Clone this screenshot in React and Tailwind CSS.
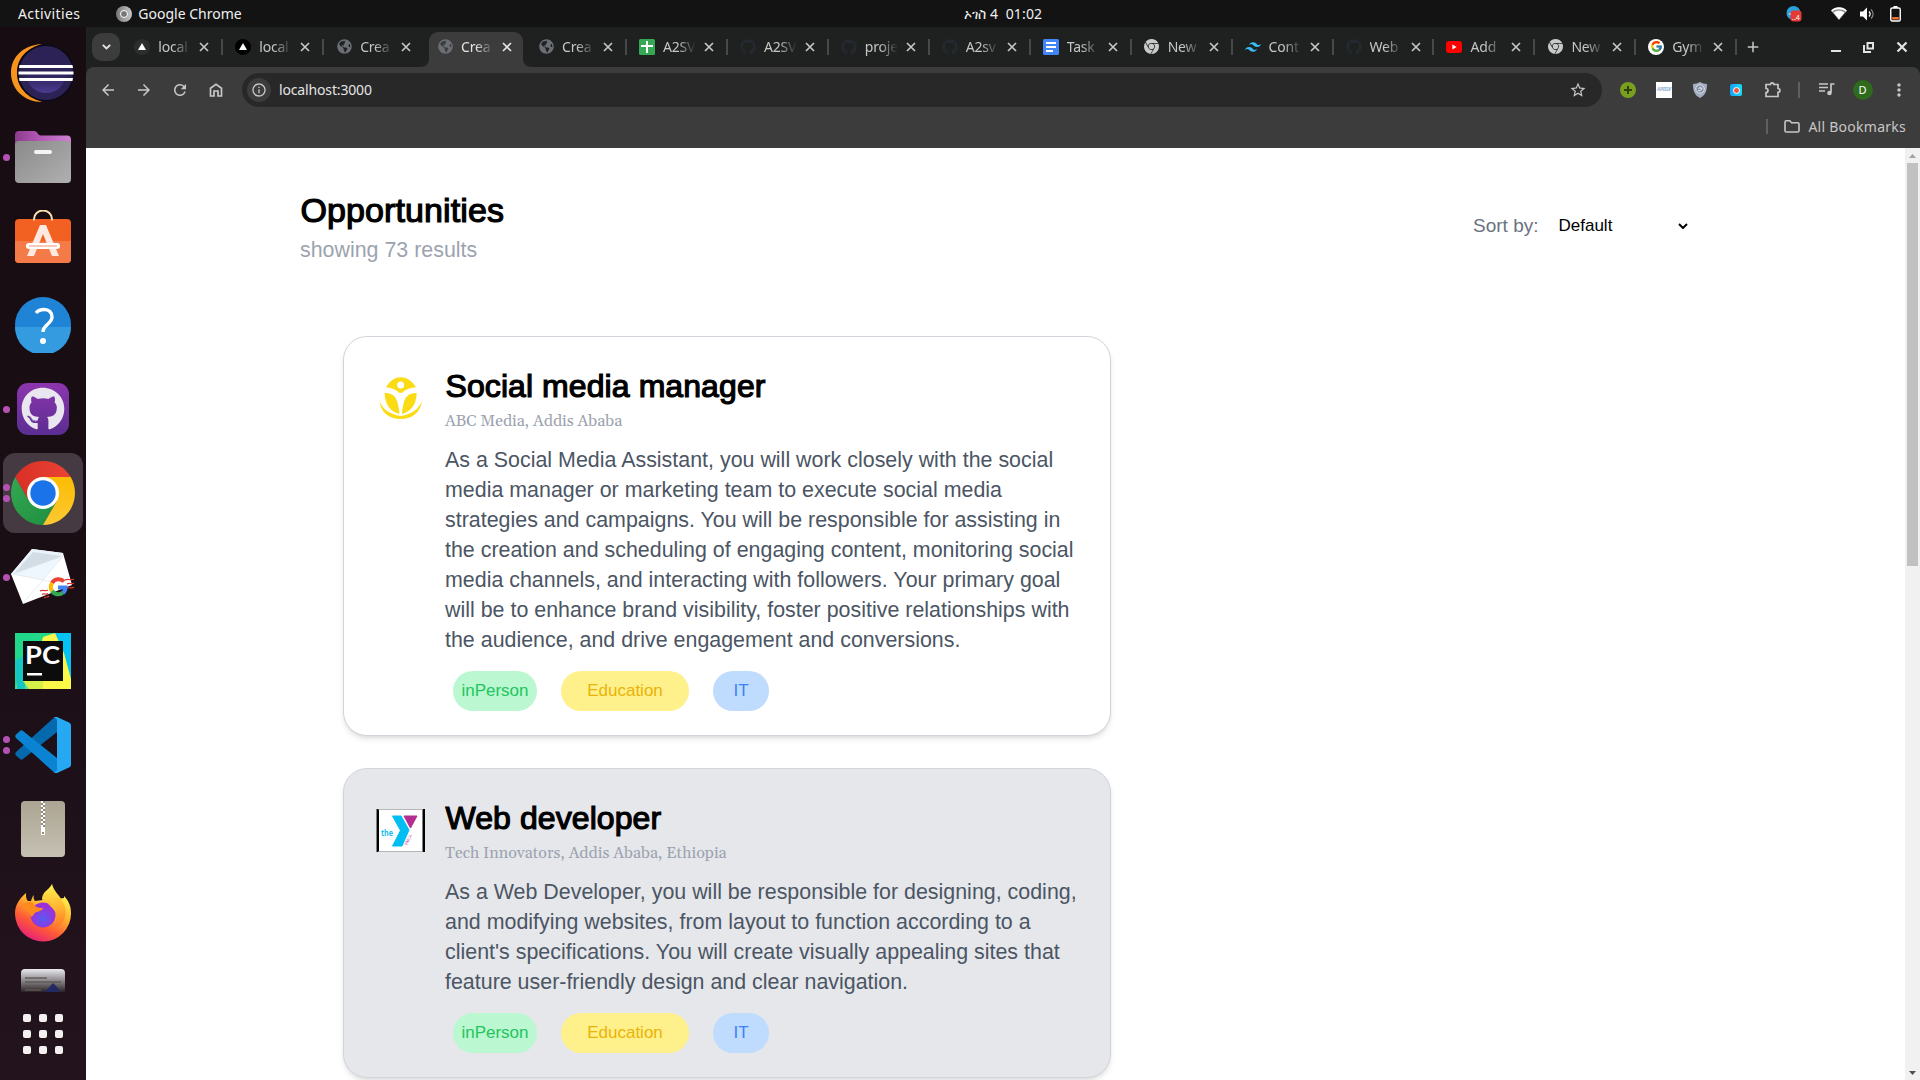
import React from "react";
import { FaGithub, FaGlobeAmericas } from "react-icons/fa";
import { SiGooglechrome, SiTailwindcss } from "react-icons/si";
import { FcGoogle } from "react-icons/fc";
import {
  MdArrowBack, MdArrowForward, MdRefresh, MdStarOutline, MdMoreVert, MdAdd, MdInfoOutline,
} from "react-icons/md";

/* ---------- favicons ---------- */
const NextIcon = ({ dark }) => (
  <span className={`flex size-4 items-center justify-center rounded-full ${dark ? "bg-black" : "bg-[#2c2e2e]"}`}>
    <svg width="8" height="7" viewBox="0 0 8 7"><path d="M4 0l4 7H0z" fill="#fff" /></svg>
  </span>
);
const Globe = () => <FaGlobeAmericas size={15} color="#6b6f75" />;
const Octo = () => <FaGithub size={16} color="#24292f" />;
const ChromeGrey = () => <SiGooglechrome size={15} color="#c7cac8" />;
const Sheets = () => (
  <svg width="16" height="16" viewBox="0 0 16 16"><rect width="16" height="16" rx="1.5" fill="#34a853" /><path d="M7 2h2v4h5v2H9v6H7V8H2V6h5z" fill="#fff" /></svg>
);
const Docs = () => (
  <svg width="16" height="16" viewBox="0 0 16 16"><rect width="16" height="16" rx="1.5" fill="#4285f4" /><path d="M3 3h10v2H3zM3 7h10v2H3zM3 11h7v2H3z" fill="#fff" /></svg>
);
const Tube = () => (
  <svg width="16" height="12" viewBox="0 0 16 12"><rect width="16" height="12" rx="3" fill="#f00" /><path d="M6.4 3.5v5L10.6 6z" fill="#fff" /></svg>
);
const Goog = () => <span className="flex size-4 items-center justify-center rounded-full bg-white"><FcGoogle size={13} /></span>;

const tabs = [
  ["local", <NextIcon />], ["local", <NextIcon dark />], ["Crea", <Globe />], ["Crea", <Globe />], ["Crea", <Globe />],
  ["A2SV", <Sheets />], ["A2SV", <Octo />], ["proje", <Octo />], ["A2sv", <Octo />], ["Task", <Docs />],
  ["New", <ChromeGrey />], ["Cont", <SiTailwindcss size={16} color="#38bdf8" />], ["Web", <Octo />], ["Add", <Tube />],
  ["New", <ChromeGrey />], ["Gym", <Goog />],
];

function Tab({ label, icon, active, noSep }) {
  return (
    <div className={`relative flex h-[34px] w-[100.950px] shrink-0 items-center self-end ${active ? "text-[#e3e3e3]" : "text-[#c4c7c5]"}`}>
      {active && (
        <svg className="absolute -top-px left-[-5px]" width="112" height="35" viewBox="0 0 112 35">
          <path d="M0 35c6 0 9-3 9-9V10C9 4 13 0 19 0H93c6 0 10 4 10 10v16c0 6 3 9 9 9z" fill="#3c3c3c" />
        </svg>
      )}
      <span className="relative mb-[7px] ml-[12px] flex w-4 shrink-0 justify-center">{icon}</span>
      <span className="relative mb-[8px] ml-2 w-[33px] shrink-0 whitespace-nowrap text-[14px] tracking-[-0.200px] [mask-image:linear-gradient(90deg,#000_45%,transparent)]">{label}</span>
      <svg className="relative mb-[7px] ml-[8px]" width="10" height="10" viewBox="0 0 10 10" stroke="currentColor" strokeWidth="1.700"><path d="M1 1l8 8M9 1L1 9" /></svg>
      {!active && !noSep && <span className="absolute top-[6px] right-0 h-4 w-[2px] bg-[#474949]" />}
    </div>
  );
}

/* ---------- dock icons ---------- */
const Eclipse = () => (
  <svg width="64" height="60" viewBox="0 0 64 60">
    <defs><linearGradient id="ec" x1="0" y1="0" x2="0" y2="1"><stop offset="0" stopColor="#2c2255" /><stop offset=".5" stopColor="#2c2255" /><stop offset="1" stopColor="#4b3a8f" /></linearGradient></defs>
    <path d="M31 1C12 2 0 14 0 30s13 29 31 29C17 53 6 46 6 30S17 5 31 1z" fill="#f7941e" />
    <circle cx="35" cy="30" r="28.5" fill="#0d0a18" />
    <circle cx="35" cy="30" r="27" fill="#2c2255" />
    <circle cx="35" cy="30" r="20" fill="url(#ec)" />
    <path d="M8.5 22h53l.5 3H8zM7.500 28.500h55v3h-55zM8 35h54l-.5 3h-53z" fill="#fff" />
  </svg>
);
const Files = () => (
  <svg width="56" height="52" viewBox="0 0 56 52">
    <defs>
      <linearGradient id="fp"><stop offset="0" stopColor="#8b3b8c" /><stop offset=".4" stopColor="#b155b4" /><stop offset="1" stopColor="#cc82cf" /></linearGradient>
      <linearGradient id="fg" x2="1" y2="1"><stop offset="0" stopColor="#8a8a8a" /><stop offset="1" stopColor="#b0b0b0" /></linearGradient>
    </defs>
    <path d="M0 20V4a4 4 0 014-4h15c2 0 3 1 4 3 1 1 2 1.500 4 1.500h25a4 4 0 014 4V20z" fill="url(#fp)" />
    <rect y="10" width="56" height="42" rx="4" fill="url(#fg)" />
    <rect x="19" y="19" width="18" height="4" rx="2" fill="#f4f4f4" />
  </svg>
);
const Software = () => (
  <svg className="mb-[9px]" width="56" height="53" viewBox="0 0 56 53">
    <rect y="9" width="56" height="44" rx="4" fill="#f26022" />
    <path d="M0 31h56v18a4 4 0 01-4 4H4a4 4 0 01-4-4z" fill="#f47b47" />
    <path d="M19 10.500V9a9 8.500 0 0118 0v1.500" fill="none" stroke="#f7dfb0" strokeWidth="2" />
    <path d="M25 15h6l13 31h-7L28 24 19 46h-7z" fill="#ffe9e0" />
    <path d="M14 36h28" stroke="#fff" strokeWidth="6" strokeLinecap="round" /><path d="M14 36h28" stroke="#f9c9b7" strokeWidth="2" />
  </svg>
);
const Help = () => (
  <svg className="mb-px" width="56" height="56" viewBox="0 0 56 56">
    <circle cx="28" cy="28" r="28" fill="#1f84d6" />
    <path d="M0 30h56a28 28 0 01-56 0z" fill="#359be1" />
    <path d="M21 16c2-2.500 4.500-3.500 8-3.500 5 0 8 3 8 7.500 0 7-9 7.500-9 15" fill="none" stroke="#fff" strokeWidth="3.400" />
    <circle cx="28" cy="44" r="3" fill="#fff" />
  </svg>
);
const GithubApp = () => (
  <span className="flex size-[52px] items-center justify-center rounded-[11px] bg-linear-to-b from-[#8d35ae] to-[#5a2d91]">
    <FaGithub size={44} color="#e9e6f0" />
  </span>
);
const Chrome = () => (
  <svg width="64" height="64" viewBox="0 0 64 64">
    <defs>
      <linearGradient id="cr"><stop offset="0" stopColor="#d93025" /><stop offset="1" stopColor="#ea4335" /></linearGradient>
      <linearGradient id="cy" x1="0" y1="1" x2="0" y2="0"><stop offset="0" stopColor="#fcc934" /><stop offset="1" stopColor="#fbbc04" /></linearGradient>
      <linearGradient id="cg" x1="1" y1="1" x2="0" y2="0"><stop offset="0" stopColor="#1e8e3e" /><stop offset="1" stopColor="#34a853" /></linearGradient>
    </defs>
    <path d="M32 64A32 32 0 014.300 16l13.840 24h27.720z" fill="url(#cg)" />
    <path d="M59.700 16A32 32 0 0132 64l13.860-24L32 16z" fill="url(#cy)" />
    <path d="M4.300 16A32 32 0 0159.700 16H32L18.140 40z" fill="url(#cr)" />
    <circle cx="32" cy="32" r="16" fill="#fff" /><circle cx="32" cy="32" r="12.700" fill="#1a73e8" />
  </svg>
);
const Mail = () => (
  <svg width="64" height="56" viewBox="0 0 64 56">
    <path d="M0 25L21 0l31 4 9 32-49 19z" fill="#fff" />
    <path d="M0 25L21 0l31 4-20 27z" fill="#eaf3fa" />
    <path d="M4 24L22 3l28 4-22 13z" fill="#d3dde6" />
    <path d="M2 25l50-18-20 24z" fill="#eef7fd" stroke="#dde3e8" strokeWidth=".6" /><path d="M12 54l20-23 12 3" fill="none" stroke="#dde3e8" strokeWidth=".7" />
    <path d="M29 42c3-2 5 1 8-1M31 45.500c3-2 4 1 6-1M33 49c3-2 3 0 5-2M54 31c3-2 5 1 9-1M56 35c3-2 4 1 7-1M56 39c3-1 5 1 7-1" stroke="#e3342b" strokeWidth="1.200" fill="none" />
    <g fill="none" strokeWidth="4">
      <path d="M53 32.500a7.500 7.500 0 00-12 1.500" stroke="#ea4335" />
      <path d="M41 34a7.500 7.500 0 000 8" stroke="#fbbc05" />
      <path d="M41 42a7.500 7.500 0 0011 1.500" stroke="#34a853" />
      <path d="M47 38.500h7.500c0 2-.8 4-2.500 5.500" stroke="#4285f4" />
    </g>
  </svg>
);
const PyCharm = () => (
  <svg width="56" height="56" viewBox="0 0 56 56">
    <rect width="56" height="56" fill="#21d789" />
    <path d="M38 0h18v56L38 30z" fill="#07c3f2" />
    <path d="M28 4L40 0l9 20 7 26v10H14z" fill="#fcf84a" /><path d="M0 56l8-30 16-20L14 56z" fill="#5ddf8a" /><path d="M0 28l10-6v34H2z" fill="#14c7c2" />
    <path d="M8 48h20v8H14z" fill="#d6f04a" />
    <rect x="8" y="8" width="40" height="40" fill="#0c0c0c" />
    <text x="10" y="31" fontFamily="Lato, 'Open Sans', sans-serif" fontWeight="700" fontSize="25" textLength="35" lengthAdjust="spacingAndGlyphs" fill="#fff">PC</text>
    <rect x="12" y="40" width="15" height="2.500" fill="#fff" />
  </svg>
);
const Code = () => (
  <svg width="56" height="56" viewBox="0 0 56 56">
    <path d="M42 0v15L8 42c-1 1-2 1-3 0l-4-3.500c-1-1-1-2.500 0-3.500L38 1.500z" fill="#0569ae" />
    <path d="M42 56V41L8 14c-1-1-2-1-3 0l-4 3.500c-1 1-1 2.500 0 3.500l37 33.500z" fill="#0a84d2" />
    <path d="M42 0l12 5.500c1.300.6 2 1.500 2 3v39c0 1.500-.7 2.400-2 3L42 56c-2 .3-3-.4-4-1.500 2 1 4 0 4-2V3.500c0-2-2-3-4-2C39 .400 40-.3 42 0z" fill="#27a8f3" />
  </svg>
);
const Zip = () => (
  <svg width="44" height="56" viewBox="0 0 44 56">
    <defs>
      <linearGradient id="zp" x2="0" y2="1"><stop offset="0" stopColor="#aca593" /><stop offset="1" stopColor="#c5c1b2" /></linearGradient>
      <pattern id="zt" width="4" height="4" patternUnits="userSpaceOnUse"><rect width="4" height="4" fill="#8f8a7c" /><path d="M0 0h2v2H0zM2 2h2v2H2z" fill="#fff" /></pattern>
    </defs>
    <rect width="44" height="56" rx="4" fill="url(#zp)" /><rect x="20" width="4" height="27" fill="url(#zt)" />
    <rect x="20" y="26" width="4" height="8" fill="#fff" /><rect x="21" y="31" width="2" height="2" fill="#8f8a7c" />
  </svg>
);
const Firefox = () => (
  <svg width="56" height="58" viewBox="0 0 56 58">
    <defs>
      <linearGradient id="ff" x1=".8" y1="0" x2=".2" y2="1"><stop offset="0" stopColor="#fff44f" /><stop offset=".35" stopColor="#ffb22c" /><stop offset=".65" stopColor="#ff5a36" /><stop offset="1" stopColor="#e31587" /></linearGradient>
      <linearGradient id="fy" x2="0" y2="1"><stop offset="0" stopColor="#fff44f" /><stop offset=".6" stopColor="#ffa62a" /><stop offset="1" stopColor="#ff6a33" /></linearGradient>
      <radialGradient id="fv" cx=".5" cy=".65"><stop offset="0" stopColor="#5a5af5" /><stop offset="1" stopColor="#9b30d8" /></radialGradient>
    </defs>
    <path d="M11 9c0 4 0 6 2 8l3 0c1-3 1-4 3-6-1 3 0 4 1 6l8-1 7 0 14-2c0 0 0-1 0-2 6 6 7 12 7 17A28 28 0 010 30C0 21 4 15 11 9z" fill="url(#ff)" />
    <path d="M37 0c2 8 8 11 12 20 5 12-2 25-14 27 8-6 8-18-1-26-4-3-7-3-7-7 1-7 7-8 10-14z" fill="url(#fy)" />
    <circle cx="28" cy="31" r="12.500" fill="url(#fv)" />
    <path d="M5 22c4-3 8-5 12-4l3 4c3 2 6 2 8 2-1 4-7 3-9 6-1 2-2 2-3 3-1-6-5-6-11-11z" fill="#ff8a1f" />
    <path d="M33 20c5 0 8 4 8 9-2-4-4-5-8-9z" fill="#ffbd2e" />
  </svg>
);
const Editor = () => (
  <svg width="44" height="23" viewBox="0 0 44 23">
    <defs><linearGradient id="ed" x2="0" y2="1"><stop offset="0" stopColor="#e9e9ec" /><stop offset=".5" stopColor="#8c888d" /><stop offset="1" stopColor="#2b2228" /></linearGradient></defs>
    <path d="M0 23V4a4 4 0 014-4h36a4 4 0 014 4v19z" fill="url(#ed)" />
    <path d="M4 8h22v2H4zM4 12h36v2H4zM4 16h16v2H4zM4 20h16v2H4z" fill="#5d5950" opacity=".7" />
    <path d="M32 14l7 7-2 2H24z" fill="#232a63" />
  </svg>
);

const dock = [
  [<Eclipse />, 0], [<Files />, 1], [<Software />, 0], [<Help />, 0], [<GithubApp />, 1], [<Chrome />, 2, true],
  [<Mail />, 1], [<PyCharm />, 0], [<Code />, 2], [<Zip />, 0], [<Firefox />, 0],
];

function Dock() {
  return (
    <aside className="flex w-[86px] shrink-0 flex-col bg-linear-to-b from-[#180c13] via-[#1a0e15] to-[#23131d] pt-1">
      {dock.map(([icon, dots, active], i) => (
        <div key={i} className="relative flex h-[84px] shrink-0 items-center justify-center">
          {active && <span className="absolute inset-x-[3px] inset-y-[2px] rounded-xl bg-[#463a42]" />}
          <span className="relative flex">{icon}</span>
          <span className="absolute inset-y-0 left-[3px] flex flex-col justify-center gap-1">
            {Array.from({ length: dots }, (_, k) => <span key={k} className="size-[7px] rounded-full bg-[#b452b4]" />)}
          </span>
        </div>
      ))}
      <div className="mt-[14px] flex justify-center"><Editor /></div>
      <div className="mt-[22px] grid grid-cols-[repeat(3,8px)] justify-center gap-2">
        {Array.from({ length: 9 }, (_, k) => <span key={k} className="size-2 rounded-[2px] bg-[#f2f1f0]" />)}
      </div>
    </aside>
  );
}

function TopBar() {
  return (
    <header className="grid h-[27px] shrink-0 grid-cols-[1fr_auto_1fr] items-center bg-[#131313] text-[14px] leading-none text-[#f0f0f0]">
      <div className="flex items-center pl-[18px]">
        <span className="tracking-[0.400px]">Activities</span>
        <span className="ml-[36px] flex size-4 items-center justify-center rounded-full bg-linear-to-r from-[#777] to-[#c9c9c9]">
          <span className="size-2 rounded-full border-[1.500px] border-white bg-[#777]" />
        </span>
        <span className="ml-[6px]">Google Chrome</span>
      </div>
      <span className="pr-[2px] pl-[88px] tracking-[0.150px] whitespace-pre">ኦገስ 4  01:02</span>
      <div className="flex items-center justify-end pr-[19px]">
        <svg width="16" height="16" viewBox="0 0 16 16">
          <circle cx="7.500" cy="7" r="7" fill="#2aa1de" /><path d="M2 8l3-1 1 2z" fill="#fff" /><rect x="4.500" y="4.500" width="11" height="11" rx="3" fill="#e53935" />
          <text x="6" y="13.500" fontSize="7" fill="#fff" fontFamily="Noto Sans">..4</text>
        </svg>
        <svg className="ml-[29px]" width="16" height="13" viewBox="0 0 16 13"><path d="M0 3.800C4.500-.8 11.500-.8 16 3.800L8 13z" fill="#8e8e8e" /><path d="M.2 3.500C4.500-.7 11.500-.7 15.800 3.500l-1 1.200C11 1.500 5 1.500 1.200 4.700zM2.500 5.500c3-2.300 8-2.300 11 0L8 12.500z" fill="#fff" /></svg>
        <svg className="ml-[13px]" width="15" height="14" viewBox="0 0 15 14"><path d="M0 4.500h3L7 .500v13L3 9.500H0z" fill="#fff" /><path d="M9 4.500c1.500 1.400 1.500 3.600 0 5" stroke="#fff" strokeWidth="1.300" fill="none" /><path d="M11 2.500c2.800 2.500 2.800 6.500 0 9" stroke="#888" strokeWidth="1.200" fill="none" /></svg>
        <svg className="ml-[15px]" width="11" height="16" viewBox="0 0 11 16"><path d="M3.500 0h4v2h-4z" fill="#fff" /><rect x=".75" y="2" width="9.500" height="13" rx="1.500" fill="none" stroke="#fff" strokeWidth="1.400" /><rect x="2.200" y="11" width="6.600" height="2.500" fill="#f2702d" /></svg>
      </div>
    </header>
  );
}

const Slot = ({ children }) => <span className="flex w-9 shrink-0 items-center justify-center">{children}</span>;

function BrowserChrome() {
  return (
    <div className="shrink-0 bg-[#1f2120]">
      <div className="flex h-10 items-end pl-[6px]">
        <span className="mb-[6px] flex h-7 w-7 items-center justify-center rounded-[10px] bg-[#3c3c3c] text-[#e3e3e3]">
          <svg width="9" height="6" viewBox="0 0 9 6" fill="none" stroke="currentColor" strokeWidth="1.900"><path d="M.8 .8l3.700 3.700L8.200.8" /></svg>
        </span>
        <div className="ml-[2.300px] flex">
          {tabs.map(([label, icon], i) => <Tab key={i} label={label} icon={icon} active={i === 3} noSep={i === 2} />)}
        </div>
        <MdAdd className="mb-[11px] ml-[7px]" size={18} color="#c4c7c5" />
        <div className="mb-[14px] ml-auto flex items-center pr-[12px] text-white">
          <span className="mt-[8px] h-[2px] w-[10px] bg-[#e3e3e3]" />
          <svg className="ml-[22px]" width="11" height="11" viewBox="0 0 11 11" fill="none" stroke="#e3e3e3" strokeWidth="2"><path d="M4.500 1H10v5.500H4.500z" /><path d="M1 3v7h7" /></svg>
          <svg className="ml-[22px]" width="12" height="12" viewBox="0 0 12 12" stroke="#e3e3e3" strokeWidth="2.200"><path d="M1.500 1.500l9 9M10.500 1.500l-9 9" /></svg>
        </div>
      </div>
      <div className="h-[81px] rounded-t-lg bg-[#3c3c3c]">
        <div className="flex h-[46px] items-center pl-1 text-[#c7c7c7]">
          <Slot><MdArrowBack size={18} /></Slot>
          <Slot><MdArrowForward size={18} /></Slot>
          <Slot><MdRefresh size={18} /></Slot>
          <Slot><svg width="14" height="14" viewBox="0 0 14 14" fill="none" stroke="currentColor" strokeWidth="1.700"><path d="M1.500 13V5.200L7 1.200l5.500 4V13H9V8H5v5z" /></svg></Slot>
          <div className="ml-[8px] flex h-[34px] w-[1360px] shrink-0 items-center rounded-full bg-[#282828] pr-[15px] pl-[5px]">
            <span className="flex size-6 items-center justify-center rounded-full bg-[#3c3c3c]"><MdInfoOutline size={16} /></span>
            <span className="mb-[2px] ml-2 text-[14px] tracking-[-0.150px] text-[#e3e3e3]">localhost:3000</span>
            <MdStarOutline className="ml-auto" size={18} />
          </div>
          <div className="ml-[8px] flex">
            <Slot><span className="flex size-4 items-center justify-center rounded-full bg-[#7a9f1f]"><svg width="8" height="8" viewBox="0 0 8 8" stroke="#31400b" strokeWidth="2"><path d="M4 0v8M0 4h8" /></svg></span></Slot>
            <Slot><span className="flex size-4 items-center justify-center bg-white text-[5px] font-bold tracking-[-0.300px] text-[#8fb3cf] italic">APISIV</span></Slot>
            <Slot><svg width="14" height="16" viewBox="0 0 14 16"><path d="M7 0c2 1.200 4.500 2 7 2 0 6-1 11-7 14C1 13 0 8 0 2c2.500 0 5-.8 7-2z" fill="#a3adc0" /><circle cx="7" cy="7" r="4.200" fill="#8490a6" stroke="#dfe4ec" /><path d="M5 8.500c2 1 4-1 4-3M5.500 6.500a2 2 0 013 0" stroke="#fff" fill="none" /></svg></Slot>
            <Slot><span className="flex size-3 items-center justify-center rounded-[2px] bg-linear-to-r from-[#1e9cf5] to-[#13e0f7]"><span className="size-[7px] rounded-full border border-white bg-[#f2553d]" /></span></Slot>
            <Slot><svg className="ml-[2px]" width="18" height="18" viewBox="0 0 18 18" fill="none" stroke="currentColor" strokeWidth="1.700"><path d="M2 3.500h4.500a1.700 1.700 0 013.400 0H14v4a1.900 1.900 0 010 3.800V15.500H2v-4a1.900 1.900 0 000-4z" /></svg></Slot>
            <span className="ml-[8px] h-4 w-[2px] self-center bg-[#606060]" />
            <span className="ml-[8.500px] flex">
              <Slot><svg width="16" height="14" viewBox="0 0 16 14"><path d="M0 1h9M0 4.500h9M0 8h6" stroke="currentColor" strokeWidth="1.600" /><path d="M15.500 1H12v8.500" stroke="currentColor" strokeWidth="1.700" fill="none" /><circle cx="10.500" cy="10" r="2.300" fill="currentColor" /></svg></Slot>
              <Slot><span className="flex size-5 items-center justify-center rounded-full bg-[#2f6a1d] text-[11px] text-white">D</span></Slot>
              <Slot><MdMoreVert size={20} /></Slot>
            </span>
          </div>
        </div>
        <div className="flex h-[27px] items-center justify-end pr-[14px] text-[#c7c7c7]">
          <span className="h-[15px] w-[2px] bg-[#606060]" />
          <svg className="ml-[16px]" width="16" height="13" viewBox="0 0 16 13"><path d="M1 2.300C1 1.500 1.500.8 2.300.8h3.500L7.500 2.800h6.200c.8 0 1.300.5 1.300 1.300v6.600c0 .8-.5 1.300-1.300 1.300H2.300C1.500 12 1 11.500 1 10.700z" fill="none" stroke="currentColor" strokeWidth="1.600" /></svg>
          <span className="ml-2 text-[14px] tracking-[0.260px]">All Bookmarks</span>
        </div>
      </div>
    </div>
  );
}

/* ---------- page ---------- */
const Joyful = () => (
  <svg width="49" height="43" viewBox="18 21 147 129">
    <g fill="#fadb14">
      <path d="M48 52C60 32 75 22 92 22c18 0 34 10 46 30-16 2-30 5-41 16h-10C76 57 62 54 48 52z" />
      <path d="M44 69c18 0 32 6 38 26 3 13 6 25 6 37-24-6-44-27-44-63z" />
      <path d="M140 69c-18 0-32 6-38 26-3 13-6 25-6 37 24-6 44-27 44-63z" />
      <path d="M28 92c9 24 30 41 64 46 34-5 55-22 64-46-4 33-28 55-64 55S32 125 28 92z" />
    </g>
    <circle cx="92" cy="45" r="10.500" fill="#fff" />
  </svg>
);
const Ymca = () => (
  <svg width="49" height="43" viewBox="0 0 49 43">
    <rect width="49" height="43" fill="#fff" /><path d="M0.500 0h2.500v43H0.500zM46.500 0H49v43h-2.500z" fill="#000" /><path d="M2 .4h45M2 42.600h45" stroke="#999" strokeWidth=".8" />
    <path d="M16.500 7h8.500l8 14-7 16h-9.500l8-15.500z" fill="#00bdf2" strokeLinejoin="round" stroke="#00bdf2" />
    <path d="M28 7h13l-6.500 12z" fill="#b42e91" stroke="#b42e91" strokeLinejoin="round" />
    <text x="5" y="27" fontFamily="Open Sans, sans-serif" fontWeight="700" fontSize="8.500" textLength="12" lengthAdjust="spacingAndGlyphs" fill="#16bdf0">the</text>
    <text x="31" y="36.500" fontFamily="Open Sans, sans-serif" fontSize="4" fill="#b42e91" transform="rotate(-62 31 36.5)">YMCA</text>
  </svg>
);

const jobs = [
  {
    title: "Social media manager", place: "ABC Media, Addis Ababa", logo: <Joyful />, tone: "bg-white",
    text: "As a Social Media Assistant, you will work closely with the social media manager or marketing team to execute social media strategies and campaigns. You will be responsible for assisting in the creation and scheduling of engaging content, monitoring social media channels, and interacting with followers. Your primary goal will be to enhance brand visibility, foster positive relationships with the audience, and drive engagement and conversions.",
  },
  {
    title: "Web developer", place: "Tech Innovators, Addis Ababa, Ethiopia", logo: <Ymca />, tone: "bg-[#e5e7eb]",
    text: "As a Web Developer, you will be responsible for designing, coding, and modifying websites, from layout to function according to a client's specifications. You will create visually appealing sites that feature user-friendly design and clear navigation.",
  },
];

function JobCard({ title, place, logo, tone, text }) {
  return (
    <article className={`flex w-[768px] rounded-3xl border border-[#d1d5db] pb-6 pl-8 shadow-[0_4px_6px_-1px_rgba(0,0,0,0.1),0_2px_4px_-2px_rgba(0,0,0,0.1)] ${tone}`}>
      <div className="mt-10 w-[49px] shrink-0">{logo}</div>
      <div className="ml-5 w-[640px] pt-[30px]">
        <h2 className="ml-[0.500px] h-[38px] text-[32px] leading-[38px] tracking-[0.080px] text-black [-webkit-text-stroke:1.200px_#000]">{title}</h2>
        <p className="mt-1 h-6 font-['Gelasio','Liberation_Serif',serif] text-[16px] leading-6 text-[#9ca3af]">{place}</p>
        <p className="mt-3 w-[636px] text-[21.400px] leading-[30px] tracking-[0.010px] text-[#4b5563]">{text}</p>
        <div className="mt-4 ml-2 flex gap-6 text-[17px] leading-10">
          <span className="w-[84px] rounded-[20px] bg-[#bbf7d0] text-center text-[#22c55e]">inPerson</span>
          <span className="w-32 rounded-[20px] bg-[#fef08a] text-center text-[#eab308]">Education</span>
          <span className="w-14 rounded-[20px] bg-[#bfdbfe] text-center text-[#3b82f6]">IT</span>
        </div>
      </div>
    </article>
  );
}

export default function App() {
  return (
    <div className="flex h-[1080px] w-[1920px] flex-col overflow-hidden bg-white font-['Noto_Sans',sans-serif]">
      <TopBar />
      <div className="flex min-h-0 flex-1">
        <Dock />
        <div className="flex min-w-0 flex-1 flex-col">
          <BrowserChrome />
          <div className="flex min-h-0 flex-1">
            <main className="flex-1 overflow-hidden bg-white pt-[43px] font-['Liberation_Sans',Arial,sans-serif]">
              <div className="flex items-start pl-[214px]">
                <div>
                  <h1 className="ml-[0.500px] text-[34px] leading-[38px] tracking-[0.100px] text-black [-webkit-text-stroke:1.200px_#000]">Opportunities</h1>
                  <p className="mt-[5px] text-[21.400px] leading-8 text-[#9ca3af]">showing 73 results</p>
                </div>
                <div className="mt-[21px] mr-[217px] ml-auto flex items-center">
                  <span className="text-[19px] leading-7 text-[#6b7280]">Sort by:</span>
                  <span className="ml-[20px] w-[119.500px] text-[17px] text-black">Default</span>
                  <svg width="10" height="6" viewBox="0 0 10 6" fill="none" stroke="#000" strokeWidth="2"><path d="M1 1l4 4 4-4" /></svg>
                </div>
              </div>
              <div className="mt-[70px] flex flex-col gap-8 pl-[257px]">
                {jobs.map((j) => <JobCard key={j.title} {...j} />)}
              </div>
            </main>
            <div className="flex w-[15px] flex-col items-center bg-[#f1f1f1]">
              <svg className="shrink-0" width="15" height="15" viewBox="0 0 15 15"><path d="M7.500 6l3.500 4H4z" fill="#a3a3a3" /></svg>
              <span className="h-[403px] w-[11px] bg-[#c1c1c1]" />
              <svg className="mt-auto shrink-0" width="15" height="15" viewBox="0 0 15 15"><path d="M7.500 10L11 6H4z" fill="#505050" /></svg>
            </div>
          </div>
        </div>
      </div>
    </div>
  );
}
